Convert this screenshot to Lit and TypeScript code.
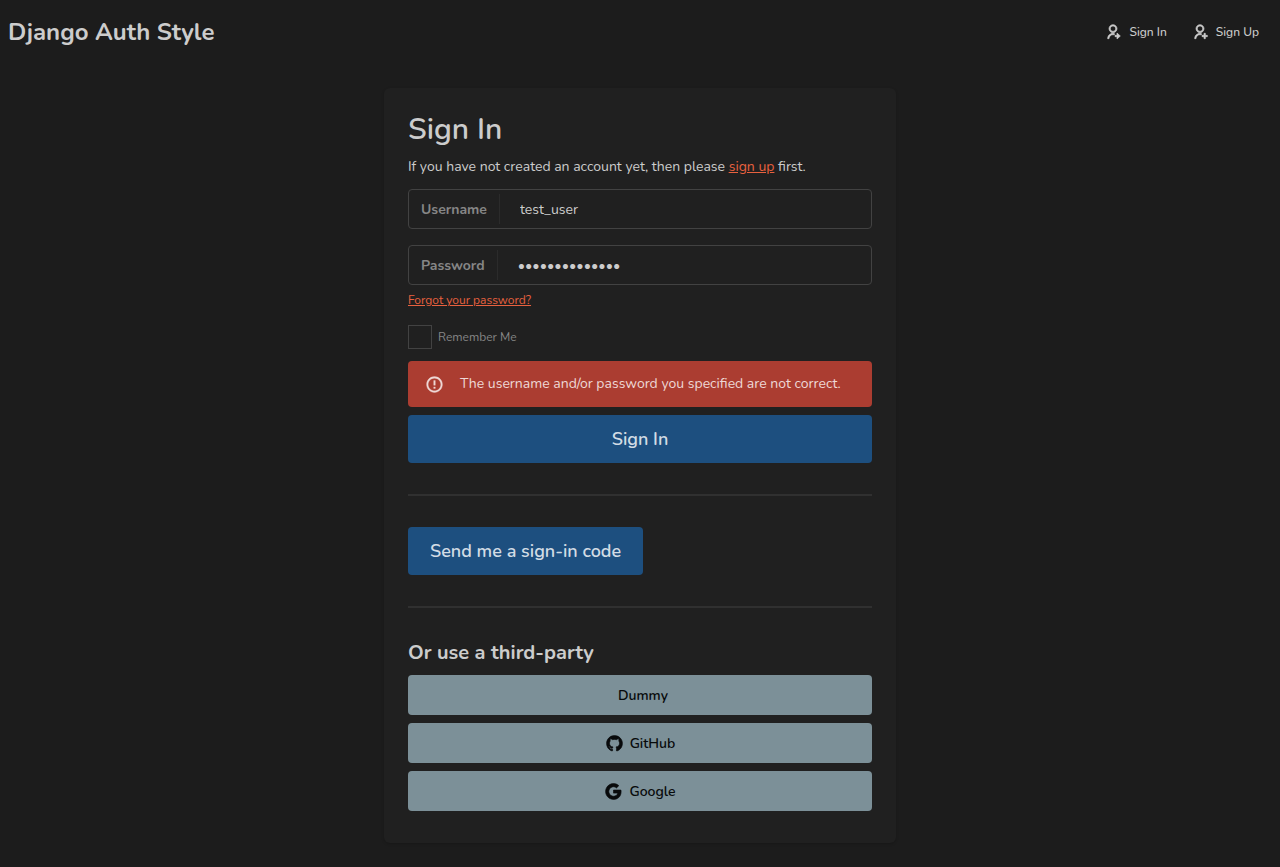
import { LitElement, html, css, svg } from "lit";
import { customElement } from "lit/decorators.js";

const person =
  "M14 14.252V16.3414C13.3744 16.1203 12.7013 16 12 16C8.68629 16 6 18.6863 6 22H4C4 17.5817 7.58172 14 12 14C12.6906 14 13.3608 14.0875 14 14.252ZM12 13C8.685 13 6 10.315 6 7C6 3.685 8.685 1 12 1C15.315 1 18 3.685 18 7C18 10.315 15.315 13 12 13ZM12 11C14.21 11 16 9.21 16 7C16 4.79 14.21 3 12 3C9.79 3 8 4.79 8 7C8 9.21 9.79 11 12 11Z";

const paths: Record<string, string> = {
  signIn: person + "M18 17V13.5L23 18L18 22.5V19H15V17H18Z",
  signUp: person + "M18 17V14H20V17H23V19H20V22H18V19H15V17H18Z",
  warning:
    "M12 22C6.47715 22 2 17.5228 2 12C2 6.47715 6.47715 2 12 2C17.5228 2 22 6.47715 22 12C22 17.5228 17.5228 22 12 22ZM12 20C16.4183 20 20 16.4183 20 12C20 7.58172 16.4183 4 12 4C7.58172 4 4 7.58172 4 12C4 16.4183 7.58172 20 12 20ZM11 15H13V17H11V15ZM11 7H13V13H11V7Z",
  github:
    "M12 2C6.475 2 2 6.475 2 12C2 16.425 4.8625 20.1625 8.8375 21.4875C9.3375 21.575 9.525 21.275 9.525 21.0125C9.525 20.775 9.5125 19.9875 9.5125 19.15C7 19.6125 6.35 18.5375 6.15 17.975C6.0375 17.6875 5.55 16.8 5.125 16.5625C4.775 16.375 4.275 15.9125 5.1125 15.9C5.9 15.8875 6.4625 16.625 6.65 16.925C7.55 18.4375 8.9875 18.0125 9.5625 17.75C9.65 17.1 9.9125 16.6625 10.2 16.4125C7.975 16.1625 5.65 15.3 5.65 11.475C5.65 10.3875 6.0375 9.4875 6.675 8.7875C6.575 8.5375 6.225 7.5125 6.775 6.1375C6.775 6.1375 7.6125 5.875 9.525 7.1625C10.325 6.9375 11.175 6.825 12.025 6.825C12.875 6.825 13.725 6.9375 14.525 7.1625C16.4375 5.8625 17.275 6.1375 17.275 6.1375C17.825 7.5125 17.475 8.5375 17.375 8.7875C18.0125 9.4875 18.4 10.375 18.4 11.475C18.4 15.3125 16.0625 16.1625 13.8375 16.4125C14.2 16.725 14.5125 17.325 14.5125 18.2625C14.5125 19.6 14.5 20.675 14.5 21.0125C14.5 21.275 14.6875 21.5875 15.1875 21.4875C19.1375 20.1625 22 16.4125 22 12C22 6.475 17.525 2 12 2Z",
  google:
    "M3.06364 7.50914C4.70909 4.24092 8.09084 2 12 2C14.6954 2 16.959 2.99095 18.6909 4.60455L15.8227 7.47274C14.7864 6.48185 13.4681 5.97727 12 5.97727C9.39542 5.97727 7.19084 7.73637 6.40455 10.1C6.2045 10.7 6.09086 11.3409 6.09086 12C6.09086 12.6591 6.2045 13.3 6.40455 13.9C7.19084 16.2636 9.39542 18.0227 12 18.0227C13.3454 18.0227 14.4909 17.6682 15.3864 17.0682C16.4454 16.3591 17.15 15.3 17.3818 14.05H12V10.1818H21.4181C21.5364 10.8363 21.6 11.5182 21.6 12.2273C21.6 15.2727 20.5091 17.8363 18.6181 19.5773C16.9636 21.1046 14.7 22 12 22C8.09084 22 4.70909 19.7591 3.06364 16.4909C2.38638 15.1409 2 13.6136 2 12C2 10.3864 2.38638 8.85911 3.06364 7.50914Z",
};

const icon = (name: string) => html`<svg class="icon ${name}" viewBox="0 0 24 24" aria-hidden="true">
  ${svg`<path d=${paths[name]}></path>`}
</svg>`;

@customElement("app-root")
export class AppRoot extends LitElement {
  static styles = css`
    :host {
      display: block;
      box-sizing: border-box;
      min-height: 100vh;
      padding-bottom: 24px;
      background: #1c1c1c;
      color: #cccccc;
      font-family: Nunito, Lato, sans-serif;
      font-size: 14px;
      line-height: 20px;
    }
    * {
      box-sizing: border-box;
    }
    h1,
    h2,
    p {
      margin: 0;
    }
    button,
    input {
      font: inherit;
      color: inherit;
    }
    .icon {
      flex: none;
      width: 19px;
      height: 19px;
      fill: currentColor;
      stroke: currentColor;
      stroke-width: 0.8;
    }
    .top {
      display: flex;
      align-items: center;
      justify-content: space-between;
      height: 64px;
      padding: 0 21px 0 8px;
    }
    .brand {
      color: inherit;
      text-decoration: none;
      font-size: 24px;
      line-height: 32px;
      font-weight: 700;
    }
    .nav {
      display: flex;
      gap: 25px;
    }
    .nav-link {
      display: flex;
      align-items: center;
      gap: 8px;
      color: inherit;
      text-decoration: none;
      font-size: 12px;
      line-height: 16px;
      font-weight: 500;
    }
    .signIn,
    .signUp {
      width: 16px;
      height: 16px;
      stroke-width: 1;
    }
    .card {
      max-width: 512px;
      margin: 24px auto 0;
      padding: 24px 24px 32px;
      border-radius: 6px;
      background: #202020;
      box-shadow: 0 1px 3px rgba(0, 0, 0, 0.2);
    }
    .title {
      font-size: 30px;
      line-height: 36px;
      font-weight: 600;
    }
    .intro {
      margin: 9px 0 12px;
    }
    .link {
      color: #e8613f;
    }
    .field {
      display: flex;
      align-items: center;
      height: 40px;
      padding-left: 12px;
      border: 1px solid #424242;
      border-radius: 4px;
    }
    .field + .field {
      margin-top: 16px;
    }
    .field-label {
      padding: 2px 12px 0 0;
      border-right: 1px solid #2b2b2b;
      line-height: 28px;
      font-weight: 700;
      color: #868686;
    }
    .field-input {
      flex: 1;
      min-width: 0;
      padding: 2px 20px 0;
      border: 0;
      outline: 0;
      background: none;
    }
    .forgot {
      display: block;
      width: fit-content;
      margin-top: 7px;
      font-size: 12px;
      line-height: 16px;
    }
    .remember {
      display: flex;
      align-items: center;
      gap: 6px;
      width: fit-content;
      margin: 17px 0 12px;
      font-size: 12px;
      line-height: 16px;
      color: #868686;
    }
    .check {
      appearance: none;
      width: 24px;
      height: 24px;
      margin: 0;
      border: 1px solid #424242;
    }
    .alert {
      display: flex;
      align-items: center;
      gap: 16px;
      min-height: 46px;
      margin-bottom: 8px;
      padding: 0 17px;
      border-radius: 4px;
      background: #ab3d31;
      color: #eed8d6;
    }
    .warning {
      stroke-width: 0.4;
    }
    .primary {
      display: block;
      height: 48px;
      padding: 0 22px;
      border: 0;
      border-radius: 4px;
      background: #1d4f7f;
      color: #d2dce5;
      font-size: 18px;
      font-weight: 600;
    }
    .wide {
      width: 100%;
    }
    .rule {
      height: 2px;
      margin: 31px 0;
      border: 0;
      background: #303030;
    }
    .subtitle {
      margin-bottom: 8px;
      font-size: 20px;
      line-height: 28px;
      font-weight: 700;
    }
    .providers {
      display: grid;
      gap: 8px;
    }
    .provider {
      display: flex;
      align-items: center;
      justify-content: center;
      height: 40px;
      border: 0;
      border-radius: 4px;
      background: #7c9098;
      color: #080a0b;
      font-weight: 600;
    }
    .provider-name {
      padding: 2px 0 0 6px;
    }
  `;

  render() {
    return html`
      <header class="top">
        <a class="brand" href="#">Django Auth Style</a>
        <nav class="nav">
          <a class="nav-link" href="#signin">${icon("signIn")}Sign In</a>
          <a class="nav-link" href="#signup">${icon("signUp")}Sign Up</a>
        </nav>
      </header>
      <main class="card">
        <h1 class="title">Sign In</h1>
        <p class="intro">
          If you have not created an account yet, then please
          <a class="link" href="#signup">sign up</a> first.
        </p>
        <form @submit=${(e: Event) => e.preventDefault()}>
          <div class="field">
            <label class="field-label" for="username">Username</label>
            <input class="field-input" id="username" type="text" value="test_user" />
          </div>
          <div class="field">
            <label class="field-label" for="password">Password</label>
            <input class="field-input" id="password" type="password" value="wrong_password" />
          </div>
          <a class="link forgot" href="#reset">Forgot your password?</a>
          <label class="remember" for="remember">
            <input class="check" id="remember" type="checkbox" />Remember Me
          </label>
          <div class="alert" role="alert">
            ${icon("warning")}
            <span>The username and/or password you specified are not correct.</span>
          </div>
          <button class="primary wide" type="submit">Sign In</button>
        </form>
        <hr class="rule" />
        <button class="primary" type="button">Send me a sign-in code</button>
        <hr class="rule" />
        <h2 class="subtitle">Or use a third-party</h2>
        <div class="providers">
          <button class="provider" type="button"><span class="provider-name">Dummy</span></button>
          <button class="provider" type="button">
            ${icon("github")}<span class="provider-name">GitHub</span>
          </button>
          <button class="provider" type="button">
            ${icon("google")}<span class="provider-name">Google</span>
          </button>
        </div>
      </main>
    `;
  }
}
